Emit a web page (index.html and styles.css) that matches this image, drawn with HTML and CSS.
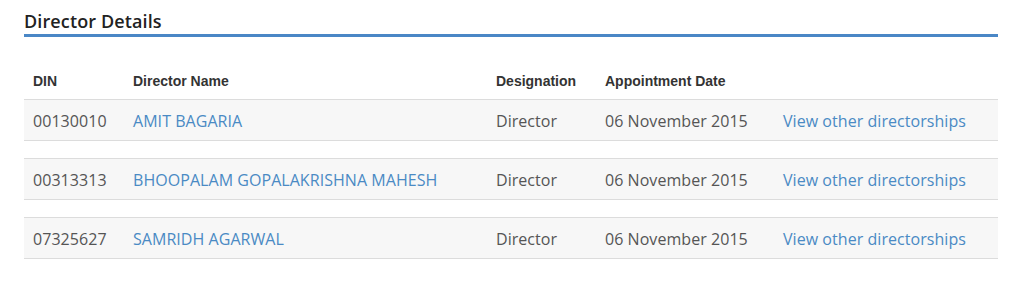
FILE: index.html
```html
<!DOCTYPE html>
<html>
<head>
<meta charset="utf-8">
<link rel="stylesheet" href="styles.css">
</head>
<body>
<div class="wrap">
  <h2 class="title">Director Details</h2>
  <div class="table">
    <div class="row head">
      <div class="cell">DIN</div>
      <div class="cell">Director Name</div>
      <div class="cell">Designation</div>
      <div class="cell">Appointment Date</div>
      <div class="cell"></div>
    </div>
    <div class="row item">
      <div class="cell">00130010</div>
      <div class="cell"><a href="#">AMIT BAGARIA</a></div>
      <div class="cell">Director</div>
      <div class="cell">06 November 2015</div>
      <div class="cell"><a href="#">View other directorships</a></div>
    </div>
    <div class="row item">
      <div class="cell">00313313</div>
      <div class="cell"><a href="#">BHOOPALAM GOPALAKRISHNA MAHESH</a></div>
      <div class="cell">Director</div>
      <div class="cell">06 November 2015</div>
      <div class="cell"><a href="#">View other directorships</a></div>
    </div>
    <div class="row item">
      <div class="cell">07325627</div>
      <div class="cell"><a href="#">SAMRIDH AGARWAL</a></div>
      <div class="cell">Director</div>
      <div class="cell">06 November 2015</div>
      <div class="cell"><a href="#">View other directorships</a></div>
    </div>
  </div>
</div>
</body>
</html>
```
FILE: styles.css
```css
html, body {
  margin: 0;
  padding: 0;
  background: #fff;
}
.wrap {
  padding: 0 26px 0 24px;
  font-family: "Open Sans", "Liberation Sans", sans-serif;
}
.title {
  margin: 0;
  padding: 9px 0 1px 0;
  font-size: 18px;
  line-height: 24px;
  font-weight: 600;
  letter-spacing: 0.12px;
  color: #222;
  border-bottom: 3px solid #4a87c6;
}
.table {
  display: flex;
  flex-direction: column;
  gap: 17px;
}
.row {
  display: grid;
  grid-template-columns: 100px 363px 109px 178px 1fr;
}
.cell {
  padding-left: 9px;
  white-space: nowrap;
}
.head {
  padding: 34px 0 8px 0;
  font-family: "Liberation Sans", Arial, sans-serif;
  font-weight: bold;
  font-size: 14px;
  line-height: 20px;
  color: #333;
  margin-bottom: -17px;
}
.item {
  background: #f7f7f7;
  border-top: 1px solid #dcdcdc;
  border-bottom: 1px solid #dcdcdc;
  padding: 10px 0 8px 0;
  font-size: 16px;
  line-height: 22px;
  letter-spacing: 0.05px;
  color: #555;
}
.item a {
  color: #4a8ac4;
  text-decoration: none;
}
.item a:first-child {
  letter-spacing: 0.05px;
}
```
